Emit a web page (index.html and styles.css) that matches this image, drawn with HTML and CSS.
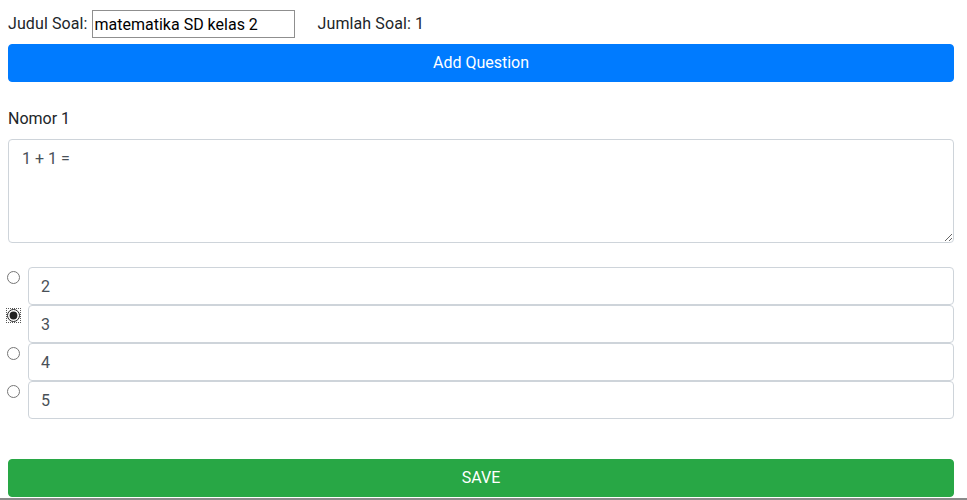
FILE: index.html
```html
<!DOCTYPE html>
<html lang="id">
<head>
<meta charset="utf-8">
<title>Soal</title>
<link rel="stylesheet" href="styles.css">
</head>
<body>
<div class="page">
  <div class="top-row">
    <label class="lbl" for="judul">Judul Soal:</label>
    <input id="judul" class="title-input" type="text" value="matematika SD kelas 2">
    <span class="count">Jumlah Soal: 1</span>
  </div>
  <button class="btn btn-primary" type="button">Add Question</button>

  <div class="question">
    <div class="q-label">Nomor 1</div>
    <textarea class="form-control q-text">1 + 1 =</textarea>
  </div>

  <div class="options">
    <div class="option"><input class="radio" type="radio" name="ans"><input class="form-control opt-input" type="text" value="2"></div>
    <div class="option"><input class="radio radio-checked" type="radio" name="ans" checked><input class="form-control opt-input" type="text" value="3"></div>
    <div class="option"><input class="radio" type="radio" name="ans"><input class="form-control opt-input" type="text" value="4"></div>
    <div class="option"><input class="radio" type="radio" name="ans"><input class="form-control opt-input" type="text" value="5"></div>
  </div>

  <button class="btn btn-success" type="button">SAVE</button>
</div>
<div class="bottom-line"></div>
</body>
</html>
```

FILE: styles.css
```css
html, body {
  margin: 0;
  padding: 0;
  background: #fff;
}
body {
  font-family: Roboto, "Liberation Sans", sans-serif;
  font-size: 16px;
  line-height: 1.5;
  color: #212529;
  overflow: hidden;
}
.page {
  width: 946px;
  padding: 0 8px;
}
.top-row {
  display: flex;
  align-items: center;
  height: 28px;
  padding-top: 10px;
}
.lbl {
  margin-right: 4px;
  letter-spacing: 0.1px;
}
.title-input {
  box-sizing: border-box;
  width: 203px;
  height: 28px;
  border: 1px solid #8f8f8f;
  padding: 1px 2px;
  font-family: Roboto, "Liberation Sans", sans-serif;
  font-size: 16px;
  color: #000;
  margin: 0;
}
.count {
  margin-left: 23px;
  letter-spacing: 0.1px;
}
.btn {
  display: block;
  box-sizing: border-box;
  width: 100%;
  height: 38px;
  border: 1px solid transparent;
  border-radius: 4px;
  font-family: Roboto, "Liberation Sans", sans-serif;
  font-size: 16px;
  line-height: 1.5;
  color: #fff;
  padding: 6px 12px;
  text-align: center;
}
.btn-primary {
  background: #007bff;
  border-color: #007bff;
  margin-top: 6px;
}
.btn-success {
  background: #28a745;
  border-color: #28a745;
  margin-top: 40px;
}
.question {
  margin-top: 25px;
}
.q-label {
  height: 24px;
  margin-bottom: 8px;
}
.form-control {
  box-sizing: border-box;
  width: 100%;
  border: 1px solid #ced4da;
  border-radius: 4px;
  font-family: Roboto, "Liberation Sans", sans-serif;
  font-size: 16px;
  line-height: 1.5;
  color: #495057;
  background: #fff;
  padding: 6px 12px;
  margin: 0;
}
.q-text {
  display: block;
  height: 104px;
  padding-left: 13px;
  padding-top: 7px;
}
.options {
  margin-top: 24px;
}
.option {
  display: flex;
  align-items: flex-start;
}
.radio {
  width: 13px;
  height: 13px;
  margin: 4px 8px 0 -1px;
  flex: none;
  accent-color: #222;
}
.radio-checked {
  outline: 1px dotted #555;
  outline-offset: 0;
}
.opt-input {
  flex: 1;
  height: 38px;
  padding-top: 6px;
  padding-bottom: 6px;
}
.bottom-line {
  height: 2px;
  margin-top: 1px;
  background: #8a8a8a;
}
```
